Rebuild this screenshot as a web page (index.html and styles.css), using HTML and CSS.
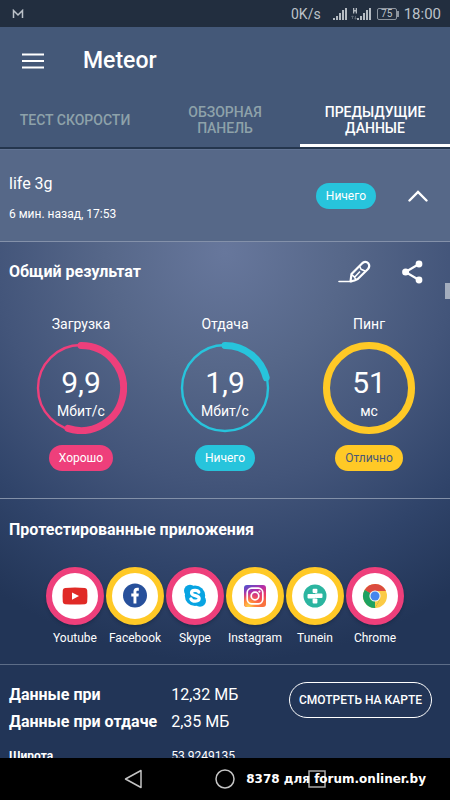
FILE: index.html
```html
<!DOCTYPE html>
<html lang="ru">
<head>
<meta charset="utf-8">
<meta name="viewport" content="width=device-width, initial-scale=1">
<title>Meteor</title>
<link rel="stylesheet" href="styles.css">
</head>
<body>
<div class="app">
  <div class="status">
    <svg class="status-logo" width="12" height="10" viewBox="0 0 12 10" aria-hidden="true"><path d="M1.500 9V1.500L6 6l4.500-4.500V9" fill="none" stroke="#bcc2c9" stroke-width="1.500"/></svg>
    <span class="status-rate">0K/s</span>
    <svg class="status-signal" width="14" height="14" viewBox="0 0 14 14" fill="#b4bac1" aria-hidden="true"><path d="M0 11h2v2H0zM3 9h2v4H3zM6 6h2v7H6zM9 3h2v10H9zM12 1h2v12h-2z"/></svg>
    <svg class="status-signal-data" width="20" height="14" viewBox="0 0 20 14" fill="#b4bac1" aria-hidden="true"><path d="M6 11h2v2H6zM9 9h2v4H9zM12 6h2v7h-2zM15 3h2v10h-2zM18 1h2v12h-2zM2 1h1.300v2h1.400V1H6v5.500H4.700v-2H3.300v2H2z"/><path d="M1.500 12V9M.3 10l1.200-1.200L2.700 10M4.500 9v3M3.300 11l1.200 1.200L5.700 11" fill="none" stroke="#68727e" stroke-width=".8"/></svg>
    <span class="battery">75</span>
    <span class="clock">18:00</span>
  </div>

  <header class="header">
    <div class="toolbar">
      <button class="icon-button" aria-label="Меню">
        <svg width="22" height="16" viewBox="0 0 22 16" aria-hidden="true"><path d="M0 1.500h22M0 8h22M0 14.500h22" stroke="#fff" stroke-width="2.200"/></svg>
      </button>
      <h1 class="title">Meteor</h1>
    </div>
    <nav class="tabs">
      <a class="tab" href="#test">ТЕСТ СКОРОСТИ</a>
      <a class="tab" href="#overview">ОБЗОРНАЯ ПАНЕЛЬ</a>
      <a class="tab tab-active" href="#history">ПРЕДЫДУЩИЕ ДАННЫЕ</a>
    </nav>
  </header>

  <main class="content">
    <section class="network">
      <div class="network-info">
        <h2 class="network-name">life 3g</h2>
        <p class="network-time">6 мин. назад, 17:53</p>
      </div>
      <span class="pill pill-cyan">Ничего</span>
      <button class="icon-button" aria-label="Свернуть">
        <svg width="20" height="12" viewBox="0 0 20 12" aria-hidden="true"><path d="M1.500 10.500 10 2l8.500 8.500" fill="none" stroke="#fff" stroke-width="2.400" stroke-linecap="round"/></svg>
      </button>
    </section>

    <div class="details">
      <section class="results">
        <div class="section-head">
          <h2 class="section-title">Общий результат</h2>
          <button class="icon-button" aria-label="Редактировать">
            <svg width="33" height="24" viewBox="0 0 33 24" fill="none" stroke="#fff" stroke-width="2.200" stroke-linejoin="round" aria-hidden="true"><path d="M1 21.500h13" stroke-width="1.600" stroke-linecap="round"/><path d="M12.500 21.300 13.500 14 24.500 3Q27.800 .800 30.300 3.300 32.300 6 30 9L19.500 19.200Q17 21 12.500 21.300Z"/><path d="M21.800 6.500l1.200 2.800 4 1.800M14 14.800l2.300 2 1.500 2.800M17 16.700l5-5.200" stroke-width="1.600"/></svg>
          </button>
          <button class="icon-button" aria-label="Поделиться">
            <svg width="21" height="24" viewBox="0 0 21 24" aria-hidden="true"><path d="M17 4 3.500 12 17 20" fill="none" stroke="#fff" stroke-width="2.200"/><g fill="#fff"><circle cx="17" cy="4" r="3.400"/><circle cx="3.600" cy="12" r="3.500"/><circle cx="17" cy="20" r="3.400"/></g></svg>
          </button>
        </div>
        <div class="gauges">
          <div class="gauge">
            <h3 class="gauge-name">Загрузка</h3>
            <div class="dial">
              <svg class="dial-ring" viewBox="0 0 92 92" fill="none" stroke="#ee3f7b" aria-hidden="true"><circle cx="46" cy="46" r="43" stroke-width="2.400"/><path d="M46 3.500A42.500 42.500 0 1 1 32.900 86.400" stroke-width="7" stroke-linecap="round"/></svg>
              <span class="dial-value">9,9</span>
              <span class="dial-unit">Мбит/с</span>
            </div>
            <span class="pill pill-pink">Хорошо</span>
          </div>
          <div class="gauge">
            <h3 class="gauge-name">Отдача</h3>
            <div class="dial">
              <svg class="dial-ring" viewBox="0 0 92 92" fill="none" stroke="#27c4dc" aria-hidden="true"><circle cx="46" cy="46" r="43" stroke-width="2.400"/><path d="M46 3.500A42.500 42.500 0 0 1 87.200 35.700" stroke-width="7" stroke-linecap="round"/></svg>
              <span class="dial-value">1,9</span>
              <span class="dial-unit">Мбит/с</span>
            </div>
            <span class="pill pill-cyan">Ничего</span>
          </div>
          <div class="gauge">
            <h3 class="gauge-name">Пинг</h3>
            <div class="dial">
              <svg class="dial-ring" viewBox="0 0 92 92" fill="none" stroke="#ffc926" aria-hidden="true"><circle cx="46" cy="46" r="42.500" stroke-width="7"/></svg>
              <span class="dial-value">51</span>
              <span class="dial-unit">мс</span>
            </div>
            <span class="pill pill-yellow">Отлично</span>
          </div>
        </div>
      </section>

      <section class="apps">
        <h2 class="section-title">Протестированные приложения</h2>
        <ul class="app-list">
          <li class="app-item">
            <span class="badge badge-pink"><svg width="26" height="26" viewBox="0 0 26 26" aria-hidden="true"><path d="M3 5Q13 4 23 5q2 .2 2.200 2.200.5 6 0 11.800-.2 2-2.200 2.200-10 .8-20 0Q1 21 .8 19q-.5-6 0-11.800Q1 5.200 3 5Z" fill="#e02a26"/><path d="m10 9.500 7 3.600-7 3.600z" fill="#fff"/></svg></span>
            Youtube
          </li>
          <li class="app-item">
            <span class="badge badge-yellow"><svg width="26" height="26" viewBox="0 0 26 26" aria-hidden="true"><circle cx="13" cy="12.500" r="12" fill="#27509b"/><path d="M11.500 20.500v-7H9.300v-3h2.200V8.600c0-2.500 1.300-3.800 3.700-3.800h1.600v2.900h-1.200c-1 0-1.200.5-1.200 1.300v1.500h2.400l-.3 3h-2.100v7z" fill="#fff"/></svg></span>
            Facebook
          </li>
          <li class="app-item">
            <span class="badge badge-pink"><svg width="26" height="26" viewBox="0 0 26 26" aria-hidden="true"><g fill="#08a4e2"><circle cx="13" cy="12.700" r="10.200"/><circle cx="8" cy="7.700" r="6"/><circle cx="18" cy="17.700" r="6"/></g><path d="M16.800 9.200C15.800 6.800 9.600 6.700 9.500 9.800c0 3.700 7.700 2 7.700 5.800 0 3.300-7 3.300-8.300.4" fill="none" stroke="#fff" stroke-width="3.200" stroke-linecap="round"/></svg></span>
            Skype
          </li>
          <li class="app-item">
            <span class="badge badge-yellow"><svg width="26" height="26" viewBox="0 0 26 26" aria-hidden="true"><defs><linearGradient id="ig-base" x1="0" y1="0" x2=".5" y2="1"><stop offset="0" stop-color="#4655d0"/><stop offset=".4" stop-color="#b52da8"/><stop offset=".75" stop-color="#ed3d62"/><stop offset="1" stop-color="#f9733d"/></linearGradient><radialGradient id="ig-glow" cx=".2" cy="1" r=".7"><stop offset="0" stop-color="#ffd34f"/><stop offset=".4" stop-color="#ff8d3a"/><stop offset="1" stop-color="#ff5a4a" stop-opacity="0"/></radialGradient></defs><rect x="2" y="2" width="22" height="22" rx="3" fill="url(#ig-base)"/><rect x="2" y="2" width="22" height="22" rx="3" fill="url(#ig-glow)"/><g fill="none" stroke="#fff" stroke-width="1.700"><rect x="5.200" y="5.200" width="15.600" height="15.600" rx="4.500"/><circle cx="13" cy="13" r="3.800"/></g><circle cx="17.400" cy="8.600" r="1.100" fill="#fff"/></svg></span>
            Instagram
          </li>
          <li class="app-item">
            <span class="badge badge-yellow"><svg width="26" height="26" viewBox="0 0 26 26" aria-hidden="true"><circle cx="13" cy="13" r="11.500" fill="#2bb5a0"/><g fill="#fff"><rect x="10.600" y="5.700" width="4.800" height="4.300" rx="1"/><rect x="10.600" y="15.500" width="4.800" height="5" rx="1"/><rect x="5.500" y="11" width="7.800" height="4.500" rx="1"/><rect x="12.800" y="10.500" width="7.700" height="4.500" rx="1"/></g></svg></span>
            Tunein
          </li>
          <li class="app-item">
            <span class="badge badge-pink"><svg width="26" height="26" viewBox="0 0 26 26" aria-hidden="true"><circle cx="13" cy="13" r="12" fill="#fbcb45"/><path d="M13 13 2.600 7A12 12 0 0 0 13 25l5.200-9z" fill="#1da261"/><path d="M13 13 2.600 7A12 12 0 0 1 24 8H13z" fill="#db4b3f"/><path d="m2.600 7 5.200 9L13 13z" fill="#1da261"/><path d="m13 25 5.200-9L13 13z" fill="#fbcb45"/><circle cx="13" cy="13" r="5.600" fill="#f2f5f5"/><circle cx="13" cy="13" r="4.500" fill="#4485ee"/></svg></span>
            Chrome
          </li>
        </ul>
      </section>

      <section class="data">
        <dl class="data-list">
          <dt>Данные при</dt><dd>12,32 МБ</dd>
          <dt>Данные при отдаче</dt><dd>2,35 МБ</dd>
          <dt class="small">Широта</dt><dd class="small">53.9249135</dd>
        </dl>
        <button class="map-button">СМОТРЕТЬ НА КАРТЕ</button>
      </section>
      <span class="scroll-thumb"></span>
    </div>
  </main>

  <footer class="navbar">
    <button class="nav-button" aria-label="Назад"><svg width="22" height="22" viewBox="0 0 22 22" aria-hidden="true"><path d="M19 2.500v17L3.500 11z" fill="none" stroke="#c4c4c4" stroke-width="1.500" stroke-linejoin="round"/></svg></button>
    <button class="nav-button" aria-label="Домой"><svg width="22" height="22" viewBox="0 0 22 22" aria-hidden="true"><circle cx="11" cy="11" r="9" fill="none" stroke="#c4c4c4" stroke-width="1.500"/></svg></button>
    <button class="nav-button" aria-label="Недавние"><svg width="22" height="22" viewBox="0 0 22 22" aria-hidden="true"><path d="M3 3h16v16H3z" fill="none" stroke="#a8a8a8" stroke-width="1.500"/></svg></button>
    <span class="watermark">8378 для forum.onliner.by</span>
  </footer>
</div>
</body>
</html>
```
FILE: styles.css
```css
* {
  box-sizing: border-box;
}

body,
h1,
h2,
h3,
p,
ul,
dl,
dd {
  margin: 0;
  padding: 0;
}

body {
  font-family: Roboto, "Noto Sans", sans-serif;
  color: #fff;
  background: #000;
}

button {
  font: inherit;
  color: inherit;
  background: none;
  border: 0;
  padding: 0;
}

svg {
  display: block;
}

.app {
  display: flex;
  flex-direction: column;
  height: 100vh;
}

.status {
  display: flex;
  align-items: center;
  flex: none;
  height: 27px;
  padding: 0 9px 0 12px;
  background: #222e3f;
  color: #bcc2c9;
}

.status-rate {
  margin-left: auto;
  font-size: 14px;
}

.status-signal {
  margin-left: 12px;
}

.status-signal-data {
  margin-left: 4px;
}

.battery {
  position: relative;
  width: 20px;
  margin: 0 7px 0 6px;
  border: 1px solid #8d959f;
  border-radius: 2px;
  font-size: 10px;
  line-height: 10px;
  text-align: center;
}

.battery::after {
  content: "";
  position: absolute;
  top: 2px;
  right: -3px;
  width: 2px;
  height: 6px;
  background: #8d959f;
}

.clock {
  font-size: 15px;
}

.header {
  flex: none;
  background: #445878;
  border-bottom: 2px solid #24354d;
}

.toolbar {
  display: flex;
  align-items: center;
  gap: 39px;
  height: 67px;
  padding: 0 22px;
}

.title {
  font-size: 23px;
  font-weight: 500;
}

.tabs {
  display: grid;
  grid-template-columns: repeat(3, 1fr);
  height: 53px;
}

.tab {
  display: flex;
  align-items: center;
  justify-content: center;
  padding: 2px 16px 0;
  border-bottom: 3px solid transparent;
  color: #8ea2aa;
  font-size: 14px;
  font-weight: 500;
  line-height: 16px;
  text-align: center;
  text-decoration: none;
}

.tab-active {
  color: #fff;
  border-color: #fff;
}

.content {
  display: flex;
  flex-direction: column;
  flex: 1;
  min-height: 0;
  overflow: hidden;
}

.network {
  display: flex;
  align-items: center;
  flex: none;
  gap: 32px;
  height: 93px;
  padding: 0 22px 0 9px;
  background: #566888;
  border-top: 1px solid #607292;
  border-bottom: 1px solid #8491aa;
}

.network-info {
  flex: 1;
  padding-top: 4px;
}

.network-name {
  font-size: 16px;
  font-weight: 400;
  line-height: 24px;
}

.network-time {
  margin-top: 8px;
  font-size: 12px;
  line-height: 20px;
}

.pill {
  display: inline-block;
  padding: 0 10px;
  border-radius: 13px;
  font-size: 12px;
  line-height: 26px;
}

.pill-cyan {
  background: #27c4dc;
}

.pill-pink {
  background: #ee3f7b;
}

.pill-yellow {
  background: #ffc926;
  color: #4a5878;
}

.details {
  position: relative;
  flex: 1;
  background: radial-gradient(circle at 50% 10px, #67779c 0, #566789 120px, #43557a 230px, #30446a 320px, #223557 410px);
}

.results {
  height: 257px;
  padding: 0 9px;
  border-bottom: 1px solid #8290a8;
}

.section-head {
  display: flex;
  align-items: center;
  gap: 31px;
  padding: 18px 18px 0 0;
}

.section-head .section-title {
  flex: 1;
}

.section-title {
  font-size: 16px;
  font-weight: 700;
  line-height: 24px;
}

.gauges {
  display: grid;
  grid-template-columns: repeat(3, 1fr);
  margin-top: 30px;
}

.gauge {
  display: flex;
  flex-direction: column;
  align-items: center;
}

.gauge-name {
  font-size: 14px;
  font-weight: 400;
  line-height: 20px;
}

.dial {
  position: relative;
  display: flex;
  flex-direction: column;
  align-items: center;
  width: 92px;
  height: 92px;
  margin: 8px 0 11px;
  padding-top: 24px;
}

.dial-ring {
  position: absolute;
  inset: 0;
}

.dial-value {
  font-size: 30px;
  line-height: 34px;
}

.dial-unit {
  font-size: 14px;
  line-height: 22px;
}

.apps {
  height: 166px;
  padding: 19px 9px 0;
  border-bottom: 1px solid #5d6d88;
}

.app-list {
  display: flex;
  justify-content: center;
  margin-top: 25px;
  list-style: none;
}

.app-item {
  display: flex;
  flex-direction: column;
  align-items: center;
  gap: 4px;
  width: 60px;
  font-size: 12px;
  line-height: 18px;
}

.badge {
  display: flex;
  align-items: center;
  justify-content: center;
  width: 58px;
  height: 58px;
  border: 6px solid;
  border-radius: 50%;
  background: #fff;
  box-shadow: 0 2px 3px #14203a66;
}

.badge-pink {
  border-color: #ee3f7b;
}

.badge-yellow {
  border-color: #ffc926;
}

.data {
  display: flex;
  justify-content: space-between;
  align-items: flex-start;
  padding: 16px 18px 0 9px;
}

.data-list {
  display: grid;
  grid-template-columns: auto auto;
  column-gap: 14px;
  font-size: 16px;
  line-height: 27px;
  white-space: nowrap;
}

.data-list dt {
  font-weight: 700;
}

.data-list .small {
  margin-top: 8px;
  font-size: 12px;
}

.map-button {
  height: 36px;
  margin-top: 1px;
  padding: 0 9px;
  border: 1px solid #fff;
  border-radius: 18px;
  font-size: 12px;
  font-weight: 500;
}

.scroll-thumb {
  position: absolute;
  top: 41px;
  right: 0;
  width: 5px;
  height: 16px;
  background: #a3adbe;
}

.navbar {
  position: relative;
  display: flex;
  align-items: center;
  justify-content: center;
  gap: 70px;
  flex: none;
  height: 42px;
  background: #000;
}

.watermark {
  position: absolute;
  right: 24px;
  font-family: "DejaVu Sans", sans-serif;
  font-size: 12px;
  font-weight: 700;
}
```
